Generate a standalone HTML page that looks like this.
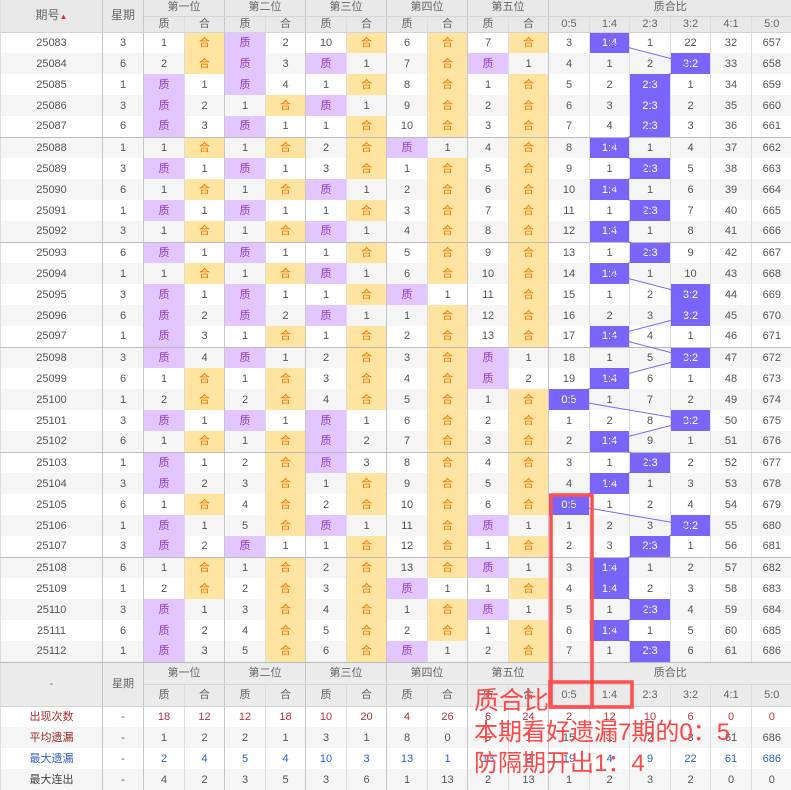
<!DOCTYPE html>
<html><head><meta charset="utf-8"><style>
body{margin:0;width:791px;height:790px;overflow:hidden;background:#fff;font-family:"Liberation Sans","Noto Sans CJK SC",sans-serif;}
#w{position:relative;width:791px;height:790px}
table{border-collapse:collapse;table-layout:fixed;width:791px;font-size:11px;color:#555}
td,th{padding:0;text-align:center;border-left:1px solid #ddd;height:21px;line-height:20px;white-space:nowrap;overflow:hidden;box-sizing:border-box}
th{background:#e8e8e8;font-weight:normal;color:#666;height:16px;line-height:15px;border-bottom:1px solid #d4d4d4}
th.t{font-size:12px}
tbody tr:nth-child(even) td{background:#f5f5f5}
tr.g td{border-bottom:1px solid #bbb}
td.b,th.b{border-left:1px solid #c6c6c6}
td.z{background:#e2c6ff!important;color:#9040c8}
td.h{background:#ffe3a0!important;color:#f07800}
td.r{background:#7a65fb!important;color:#fff}
.f th{height:22px;line-height:21px;background:#ebebeb}
.f td{height:21px;line-height:20px}
.l1{color:#b03030}.l2{color:#9a2a2a}.l3{color:#3060c8}.l4{color:#444}
.rd{color:#c03040}.bl{color:#3060d0}
#ov{position:absolute;left:0;top:0}
.tx{position:absolute;left:474px;color:#ff4747;font-size:24px;line-height:31px;font-family:"Liberation Sans","Noto Sans CJK SC",sans-serif;white-space:nowrap}
</style></head><body><div id="w">
<table>
<colgroup><col style="width:102px"><col style="width:41px"><col style="width:41px"><col style="width:40px"><col style="width:41px"><col style="width:40px"><col style="width:41px"><col style="width:40px"><col style="width:41px"><col style="width:40px"><col style="width:41px"><col style="width:40px"><col style="width:41px"><col style="width:40px"><col style="width:41px"><col style="width:40px"><col style="width:41px"><col style="width:40px"></colgroup>
<thead>
<tr><th rowspan="2" class="t" style="height:32px">期号<span style="color:#d33;font-size:8px">▲</span></th><th rowspan="2" class="t b">星期</th><th colspan="2" class="b">第一位</th><th colspan="2" class="b">第二位</th><th colspan="2" class="b">第三位</th><th colspan="2" class="b">第四位</th><th colspan="2" class="b">第五位</th><th colspan="6" class="b">质合比</th></tr>
<tr><th class="b">质</th><th>合</th><th class="b">质</th><th>合</th><th class="b">质</th><th>合</th><th class="b">质</th><th>合</th><th class="b">质</th><th>合</th><th class="b">0:5</th><th>1:4</th><th>2:3</th><th>3:2</th><th>4:1</th><th>5:0</th></tr>
</thead>
<tbody>
<tr><td>25083</td><td class="b">3</td><td class="b">1</td><td class="h">合</td><td class="z b">质</td><td>2</td><td class="b">10</td><td class="h">合</td><td class="b">6</td><td class="h">合</td><td class="b">7</td><td class="h">合</td><td class="b">3</td><td class="r">1:4</td><td>1</td><td>22</td><td>32</td><td>657</td></tr>
<tr><td>25084</td><td class="b">6</td><td class="b">2</td><td class="h">合</td><td class="z b">质</td><td>3</td><td class="z b">质</td><td>1</td><td class="b">7</td><td class="h">合</td><td class="z b">质</td><td>1</td><td class="b">4</td><td>1</td><td>2</td><td class="r">3:2</td><td>33</td><td>658</td></tr>
<tr><td>25085</td><td class="b">1</td><td class="z b">质</td><td>1</td><td class="z b">质</td><td>4</td><td class="b">1</td><td class="h">合</td><td class="b">8</td><td class="h">合</td><td class="b">1</td><td class="h">合</td><td class="b">5</td><td>2</td><td class="r">2:3</td><td>1</td><td>34</td><td>659</td></tr>
<tr><td>25086</td><td class="b">3</td><td class="z b">质</td><td>2</td><td class="b">1</td><td class="h">合</td><td class="z b">质</td><td>1</td><td class="b">9</td><td class="h">合</td><td class="b">2</td><td class="h">合</td><td class="b">6</td><td>3</td><td class="r">2:3</td><td>2</td><td>35</td><td>660</td></tr>
<tr class="g"><td>25087</td><td class="b">6</td><td class="z b">质</td><td>3</td><td class="z b">质</td><td>1</td><td class="b">1</td><td class="h">合</td><td class="b">10</td><td class="h">合</td><td class="b">3</td><td class="h">合</td><td class="b">7</td><td>4</td><td class="r">2:3</td><td>3</td><td>36</td><td>661</td></tr>
<tr><td>25088</td><td class="b">1</td><td class="b">1</td><td class="h">合</td><td class="b">1</td><td class="h">合</td><td class="b">2</td><td class="h">合</td><td class="z b">质</td><td>1</td><td class="b">4</td><td class="h">合</td><td class="b">8</td><td class="r">1:4</td><td>1</td><td>4</td><td>37</td><td>662</td></tr>
<tr><td>25089</td><td class="b">3</td><td class="z b">质</td><td>1</td><td class="z b">质</td><td>1</td><td class="b">3</td><td class="h">合</td><td class="b">1</td><td class="h">合</td><td class="b">5</td><td class="h">合</td><td class="b">9</td><td>1</td><td class="r">2:3</td><td>5</td><td>38</td><td>663</td></tr>
<tr><td>25090</td><td class="b">6</td><td class="b">1</td><td class="h">合</td><td class="b">1</td><td class="h">合</td><td class="z b">质</td><td>1</td><td class="b">2</td><td class="h">合</td><td class="b">6</td><td class="h">合</td><td class="b">10</td><td class="r">1:4</td><td>1</td><td>6</td><td>39</td><td>664</td></tr>
<tr><td>25091</td><td class="b">1</td><td class="z b">质</td><td>1</td><td class="z b">质</td><td>1</td><td class="b">1</td><td class="h">合</td><td class="b">3</td><td class="h">合</td><td class="b">7</td><td class="h">合</td><td class="b">11</td><td>1</td><td class="r">2:3</td><td>7</td><td>40</td><td>665</td></tr>
<tr class="g"><td>25092</td><td class="b">3</td><td class="b">1</td><td class="h">合</td><td class="b">1</td><td class="h">合</td><td class="z b">质</td><td>1</td><td class="b">4</td><td class="h">合</td><td class="b">8</td><td class="h">合</td><td class="b">12</td><td class="r">1:4</td><td>1</td><td>8</td><td>41</td><td>666</td></tr>
<tr><td>25093</td><td class="b">6</td><td class="z b">质</td><td>1</td><td class="z b">质</td><td>1</td><td class="b">1</td><td class="h">合</td><td class="b">5</td><td class="h">合</td><td class="b">9</td><td class="h">合</td><td class="b">13</td><td>1</td><td class="r">2:3</td><td>9</td><td>42</td><td>667</td></tr>
<tr><td>25094</td><td class="b">1</td><td class="b">1</td><td class="h">合</td><td class="b">1</td><td class="h">合</td><td class="z b">质</td><td>1</td><td class="b">6</td><td class="h">合</td><td class="b">10</td><td class="h">合</td><td class="b">14</td><td class="r">1:4</td><td>1</td><td>10</td><td>43</td><td>668</td></tr>
<tr><td>25095</td><td class="b">3</td><td class="z b">质</td><td>1</td><td class="z b">质</td><td>1</td><td class="b">1</td><td class="h">合</td><td class="z b">质</td><td>1</td><td class="b">11</td><td class="h">合</td><td class="b">15</td><td>1</td><td>2</td><td class="r">3:2</td><td>44</td><td>669</td></tr>
<tr><td>25096</td><td class="b">6</td><td class="z b">质</td><td>2</td><td class="z b">质</td><td>2</td><td class="z b">质</td><td>1</td><td class="b">1</td><td class="h">合</td><td class="b">12</td><td class="h">合</td><td class="b">16</td><td>2</td><td>3</td><td class="r">3:2</td><td>45</td><td>670</td></tr>
<tr class="g"><td>25097</td><td class="b">1</td><td class="z b">质</td><td>3</td><td class="b">1</td><td class="h">合</td><td class="b">1</td><td class="h">合</td><td class="b">2</td><td class="h">合</td><td class="b">13</td><td class="h">合</td><td class="b">17</td><td class="r">1:4</td><td>4</td><td>1</td><td>46</td><td>671</td></tr>
<tr><td>25098</td><td class="b">3</td><td class="z b">质</td><td>4</td><td class="z b">质</td><td>1</td><td class="b">2</td><td class="h">合</td><td class="b">3</td><td class="h">合</td><td class="z b">质</td><td>1</td><td class="b">18</td><td>1</td><td>5</td><td class="r">3:2</td><td>47</td><td>672</td></tr>
<tr><td>25099</td><td class="b">6</td><td class="b">1</td><td class="h">合</td><td class="b">1</td><td class="h">合</td><td class="b">3</td><td class="h">合</td><td class="b">4</td><td class="h">合</td><td class="z b">质</td><td>2</td><td class="b">19</td><td class="r">1:4</td><td>6</td><td>1</td><td>48</td><td>673</td></tr>
<tr><td>25100</td><td class="b">1</td><td class="b">2</td><td class="h">合</td><td class="b">2</td><td class="h">合</td><td class="b">4</td><td class="h">合</td><td class="b">5</td><td class="h">合</td><td class="b">1</td><td class="h">合</td><td class="r b">0:5</td><td>1</td><td>7</td><td>2</td><td>49</td><td>674</td></tr>
<tr><td>25101</td><td class="b">3</td><td class="z b">质</td><td>1</td><td class="z b">质</td><td>1</td><td class="z b">质</td><td>1</td><td class="b">6</td><td class="h">合</td><td class="b">2</td><td class="h">合</td><td class="b">1</td><td>2</td><td>8</td><td class="r">3:2</td><td>50</td><td>675</td></tr>
<tr class="g"><td>25102</td><td class="b">6</td><td class="b">1</td><td class="h">合</td><td class="b">1</td><td class="h">合</td><td class="z b">质</td><td>2</td><td class="b">7</td><td class="h">合</td><td class="b">3</td><td class="h">合</td><td class="b">2</td><td class="r">1:4</td><td>9</td><td>1</td><td>51</td><td>676</td></tr>
<tr><td>25103</td><td class="b">1</td><td class="z b">质</td><td>1</td><td class="b">2</td><td class="h">合</td><td class="z b">质</td><td>3</td><td class="b">8</td><td class="h">合</td><td class="b">4</td><td class="h">合</td><td class="b">3</td><td>1</td><td class="r">2:3</td><td>2</td><td>52</td><td>677</td></tr>
<tr><td>25104</td><td class="b">3</td><td class="z b">质</td><td>2</td><td class="b">3</td><td class="h">合</td><td class="b">1</td><td class="h">合</td><td class="b">9</td><td class="h">合</td><td class="b">5</td><td class="h">合</td><td class="b">4</td><td class="r">1:4</td><td>1</td><td>3</td><td>53</td><td>678</td></tr>
<tr><td>25105</td><td class="b">6</td><td class="b">1</td><td class="h">合</td><td class="b">4</td><td class="h">合</td><td class="b">2</td><td class="h">合</td><td class="b">10</td><td class="h">合</td><td class="b">6</td><td class="h">合</td><td class="r b">0:5</td><td>1</td><td>2</td><td>4</td><td>54</td><td>679</td></tr>
<tr><td>25106</td><td class="b">1</td><td class="z b">质</td><td>1</td><td class="b">5</td><td class="h">合</td><td class="z b">质</td><td>1</td><td class="b">11</td><td class="h">合</td><td class="z b">质</td><td>1</td><td class="b">1</td><td>2</td><td>3</td><td class="r">3:2</td><td>55</td><td>680</td></tr>
<tr class="g"><td>25107</td><td class="b">3</td><td class="z b">质</td><td>2</td><td class="z b">质</td><td>1</td><td class="b">1</td><td class="h">合</td><td class="b">12</td><td class="h">合</td><td class="b">1</td><td class="h">合</td><td class="b">2</td><td>3</td><td class="r">2:3</td><td>1</td><td>56</td><td>681</td></tr>
<tr><td>25108</td><td class="b">6</td><td class="b">1</td><td class="h">合</td><td class="b">1</td><td class="h">合</td><td class="b">2</td><td class="h">合</td><td class="b">13</td><td class="h">合</td><td class="z b">质</td><td>1</td><td class="b">3</td><td class="r">1:4</td><td>1</td><td>2</td><td>57</td><td>682</td></tr>
<tr><td>25109</td><td class="b">1</td><td class="b">2</td><td class="h">合</td><td class="b">2</td><td class="h">合</td><td class="b">3</td><td class="h">合</td><td class="z b">质</td><td>1</td><td class="b">1</td><td class="h">合</td><td class="b">4</td><td class="r">1:4</td><td>2</td><td>3</td><td>58</td><td>683</td></tr>
<tr><td>25110</td><td class="b">3</td><td class="z b">质</td><td>1</td><td class="b">3</td><td class="h">合</td><td class="b">4</td><td class="h">合</td><td class="b">1</td><td class="h">合</td><td class="z b">质</td><td>1</td><td class="b">5</td><td>1</td><td class="r">2:3</td><td>4</td><td>59</td><td>684</td></tr>
<tr><td>25111</td><td class="b">6</td><td class="z b">质</td><td>2</td><td class="b">4</td><td class="h">合</td><td class="b">5</td><td class="h">合</td><td class="b">2</td><td class="h">合</td><td class="b">1</td><td class="h">合</td><td class="b">6</td><td class="r">1:4</td><td>1</td><td>5</td><td>60</td><td>685</td></tr>
<tr class="g"><td>25112</td><td class="b">1</td><td class="z b">质</td><td>3</td><td class="b">5</td><td class="h">合</td><td class="b">6</td><td class="h">合</td><td class="z b">质</td><td>1</td><td class="b">2</td><td class="h">合</td><td class="b">7</td><td>1</td><td class="r">2:3</td><td>6</td><td>61</td><td>686</td></tr>
</tbody>
<tbody class="f">
<tr><th rowspan="2" style="height:44px">-</th><th rowspan="2" class="b">星期</th><th colspan="2" class="b">第一位</th><th colspan="2" class="b">第二位</th><th colspan="2" class="b">第三位</th><th colspan="2" class="b">第四位</th><th colspan="2" class="b">第五位</th><th colspan="6" class="b">质合比</th></tr>
<tr><th class="b">质</th><th>合</th><th class="b">质</th><th>合</th><th class="b">质</th><th>合</th><th class="b">质</th><th>合</th><th class="b">质</th><th>合</th><th class="b">0:5</th><th>1:4</th><th>2:3</th><th>3:2</th><th>4:1</th><th>5:0</th></tr>
<tr class="rd"><td class="l1">出现次数</td><td class="b">-</td><td class="b">18</td><td>12</td><td class="b">12</td><td>18</td><td class="b">10</td><td>20</td><td class="b">4</td><td>26</td><td class="b">6</td><td>24</td><td class="b">2</td><td>12</td><td>10</td><td>6</td><td>0</td><td>0</td></tr>
<tr><td class="l2">平均遗漏</td><td class="b">-</td><td class="b">1</td><td>2</td><td class="b">2</td><td>1</td><td class="b">3</td><td>1</td><td class="b">8</td><td>0</td><td class="b">5</td><td>1</td><td class="b">15</td><td>1</td><td>2</td><td>3</td><td>61</td><td>686</td></tr>
<tr class="bl"><td class="l3">最大遗漏</td><td class="b">-</td><td class="b">2</td><td>4</td><td class="b">5</td><td>4</td><td class="b">10</td><td>3</td><td class="b">13</td><td>1</td><td class="b">13</td><td>2</td><td class="b">19</td><td>4</td><td>9</td><td>22</td><td>61</td><td>686</td></tr>
<tr><td class="l4">最大连出</td><td class="b">-</td><td class="b">4</td><td>2</td><td class="b">3</td><td>5</td><td class="b">3</td><td>6</td><td class="b">1</td><td>13</td><td class="b">2</td><td>13</td><td class="b">1</td><td>2</td><td>3</td><td>2</td><td>0</td><td>0</td></tr>
</tbody>
</table>
<svg id="ov" width="791" height="790">
<polyline fill="none" stroke="#7a65fb" stroke-width="1" points="609,42.5 690,63.5 649,84.5 649,105.5 649,126.5 609,147.5 649,168.5 609,189.5 649,210.5 609,231.5 649,252.5 609,273.5 690,294.5 690,315.5 609,336.5 690,357.5 609,378.5 568,399.5 690,420.5 609,441.5 649,462.5 609,483.5 568,504.5 690,525.5 649,546.5 609,567.5 609,588.5 649,609.5 609,630.5 649,651.5"/>
<rect x="551" y="495" width="41" height="212" fill="none" stroke="#ff4f4f" stroke-width="3.5"/>
<rect x="550" y="682" width="82" height="25" fill="none" stroke="#ff4f4f" stroke-width="3.5"/>
</svg>
<div class="tx" style="top:686px;font-size:25px">质合比</div>
<div class="tx" style="top:717px">本期看好遗漏7期的0：5</div>
<div class="tx" style="top:748px">防隔期开出1：4</div>
</div></body></html>
